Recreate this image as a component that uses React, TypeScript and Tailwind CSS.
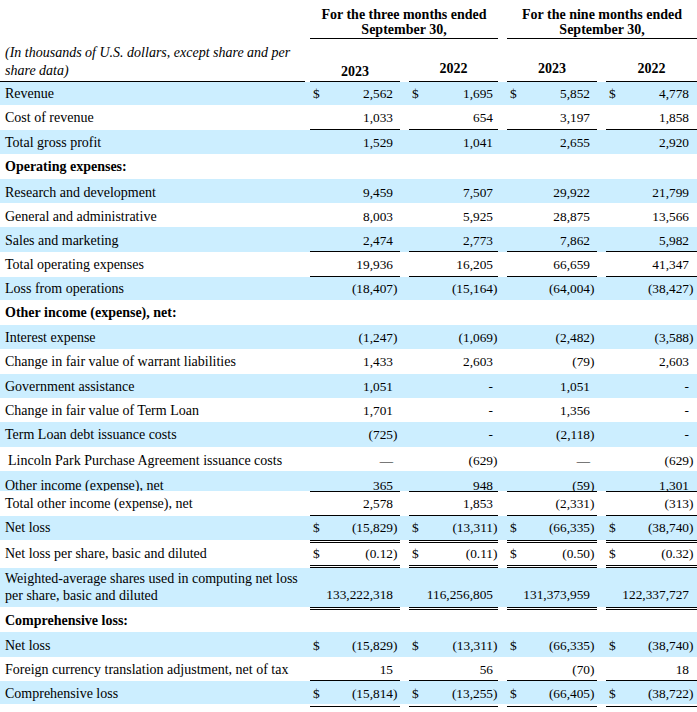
import type { ReactNode } from "react";

// Condensed statement of operations — SEC-filing style table.
// Lines are drawn with inset shadows so they never push the text around.

const ONE_BOTTOM = "shadow-[inset_0_-1px_0_#000]";
const ONE_TOP_BOTTOM = "shadow-[inset_0_1px_0_#000,inset_0_-1px_0_#000]";
const TWO_TOP_BOTTOM =
  "shadow-[inset_0_1px_0_#000,inset_0_2px_0_#fff,inset_0_3px_0_#000,inset_0_-1px_0_#000,inset_0_-2px_0_#fff,inset_0_-3px_0_#000]";
const TWO_TOP = "shadow-[inset_0_1px_0_#000,inset_0_2px_0_#fff,inset_0_3px_0_#000]";

const cols = [
  { ml: "ml-[5px]", w: "w-[90px]", paren: "w-[7px]" },
  { ml: "ml-[9px]", w: "w-[89px]", paren: "w-[5px]" },
  { ml: "ml-[9px]", w: "w-[90px]", paren: "w-[7px]" },
  { ml: "ml-[9px]", w: "w-[91px]", paren: "w-[8px]" },
];

type RowDef = {
  label: ReactNode;
  vals?: string[];
  h: string;
  pt: string;
  valPt?: string;
  blue?: boolean;
  bold?: boolean;
  dollar?: boolean;
  line?: string;
  labelClass?: string;
};

const rows: RowDef[] = [
  { label: "Revenue", vals: ["2,562", "1,695", "5,852", "4,778"], h: "h-[23px]", pt: "pt-[4px]", blue: true, dollar: true },
  { label: "Cost of revenue", vals: ["1,033", "654", "3,197", "1,858"], h: "h-[25px]", pt: "pt-[5px]", line: ONE_BOTTOM },
  { label: "Total gross profit", vals: ["1,529", "1,041", "2,655", "2,920"], h: "h-[24px]", pt: "pt-[5px]", blue: true },
  { label: "Operating expenses:", h: "h-[25px]", pt: "pt-[5px]", bold: true },
  { label: "Research and development", vals: ["9,459", "7,507", "29,922", "21,799"], h: "h-[24px]", pt: "pt-[6px]", blue: true },
  { label: "General and administrative", vals: ["8,003", "5,925", "28,875", "13,566"], h: "h-[24px]", pt: "pt-[6px]" },
  { label: "Sales and marketing", vals: ["2,474", "2,773", "7,862", "5,982"], h: "h-[25px]", pt: "pt-[6px]", blue: true, line: ONE_BOTTOM },
  { label: "Total operating expenses", vals: ["19,936", "16,205", "66,659", "41,347"], h: "h-[25px]", pt: "pt-[5px]", line: ONE_BOTTOM },
  { label: "Loss from operations", vals: ["(18,407)", "(15,164)", "(64,004)", "(38,427)"], h: "h-[23px]", pt: "pt-[4px]", blue: true },
  { label: "Other income (expense), net:", h: "h-[25px]", pt: "pt-[5px]", bold: true },
  { label: "Interest expense", vals: ["(1,247)", "(1,069)", "(2,482)", "(3,588)"], h: "h-[24px]", pt: "pt-[5px]", blue: true },
  { label: "Change in fair value of warrant liabilities", vals: ["1,433", "2,603", "(79)", "2,603"], h: "h-[25px]", pt: "pt-[5px]" },
  { label: "Government assistance", vals: ["1,051", "-", "1,051", "-"], h: "h-[24px]", pt: "pt-[5px]", blue: true },
  { label: "Change in fair value of Term Loan", vals: ["1,701", "-", "1,356", "-"], h: "h-[24px]", pt: "pt-[5px]" },
  { label: "Term Loan debt issuance costs", vals: ["(725)", "-", "(2,118)", "-"], h: "h-[25px]", pt: "pt-[5px]", blue: true },
  { label: "Lincoln Park Purchase Agreement issuance costs", vals: ["—", "(629)", "—", "(629)"], h: "h-[24px]", pt: "pt-[6px]", labelClass: "pl-[8px]" },
  { label: "Other income (expense), net", vals: ["365", "948", "(59)", "1,301"], h: "h-[20px]", pt: "pt-[7px]", blue: true },
  { label: "Total other income (expense), net", vals: ["2,578", "1,853", "(2,331)", "(313)"], h: "h-[25px]", pt: "pt-[5px]", line: ONE_TOP_BOTTOM },
  { label: "Net loss", vals: ["(15,829)", "(13,311)", "(66,335)", "(38,740)"], h: "h-[24px]", pt: "pt-[4px]", blue: true, dollar: true },
  { label: "Net loss per share, basic and diluted", vals: ["(0.12)", "(0.11)", "(0.50)", "(0.32)"], h: "h-[28px]", pt: "pt-[6px]", dollar: true, line: TWO_TOP_BOTTOM },
  {
    label: (
      <>
        Weighted-average shares used in computing net loss
        <br />
        per share, basic and diluted
      </>
    ),
    vals: ["133,222,318", "116,256,805", "131,373,959", "122,337,727"],
    h: "h-[39px]",
    pt: "pt-[2px]",
    valPt: "pt-[19px]",
    blue: true,
  },
  { label: "Comprehensive loss:", h: "h-[25px]", pt: "pt-[6px]", bold: true, vals: ["", "", "", ""], line: TWO_TOP },
  { label: "Net loss", vals: ["(15,829)", "(13,311)", "(66,335)", "(38,740)"], h: "h-[25px]", pt: "pt-[6px]", blue: true, dollar: true },
  { label: "Foreign currency translation adjustment, net of tax", vals: ["15", "56", "(70)", "18"], h: "h-[24px]", pt: "pt-[5px]", line: ONE_BOTTOM },
  { label: "Comprehensive loss", vals: ["(15,814)", "(13,255)", "(66,405)", "(38,722)"], h: "h-[23px]", pt: "pt-[5px]", blue: true, dollar: true },
];

function Value({ v, i, row }: { v: string; i: number; row: RowDef }) {
  const col = cols[i];
  const neg = v.startsWith("(") && v.endsWith(")");
  const body = neg ? v.slice(0, -1) : v;
  return (
    <div className={`${col.ml} ${col.w} ${row.line ?? ""} ${row.valPt ?? row.pt} flex h-full`}>
      <span className="w-[12px] pl-[3px]">{row.dollar ? "$" : ""}</span>
      <span className="flex-1 text-right whitespace-nowrap">{body}</span>
      <span className={col.paren}>{neg ? ")" : ""}</span>
    </div>
  );
}

function BodyRow({ row }: { row: RowDef }) {
  return (
    <div className={`flex overflow-hidden leading-[15px] ${row.h} ${row.blue ? "bg-[#cceeff]" : "bg-white"}`}>
      <div
        className={`w-[305px] shrink-0 whitespace-nowrap text-[14px] ${row.pt} ${row.labelClass ?? "pl-[5px]"} ${row.bold ? "font-bold" : ""} ${row.valPt ? "leading-[17px]" : ""}`}
      >
        {row.label}
      </div>
      {row.vals?.map((v, i) => <Value key={i} v={v} i={i} row={row} />)}
    </div>
  );
}

export default function App() {
  return (
    <div className="h-[712px] w-[697px] overflow-hidden bg-white font-['Liberation_Serif',serif] text-[13.33px] text-black">
      {/* period headers */}
      <div className="flex h-[39px] text-center text-[14px] font-bold leading-[15px]">
        <div className="w-[305px] shrink-0" />
        <div className={`ml-[5px] w-[188px] pt-[7px] ${ONE_BOTTOM}`}>
          For the three months ended
          <br />
          September 30,
        </div>
        <div className={`ml-[9px] w-[190px] pt-[7px] ${ONE_BOTTOM}`}>
          For the nine months ended
          <br />
          September 30,
        </div>
      </div>

      {/* units + years */}
      <div className="flex h-[43px]">
        <div className={`w-[305px] shrink-0 pl-[5px] pt-[5px] text-[14px] italic leading-[18px] ${ONE_BOTTOM}`}>
          (In thousands of U.S. dollars, except share and per
          <br />
          share data)
        </div>
        <div className={`ml-[5px] w-[90px] pt-[25px] text-center text-[14px] font-bold leading-[15px] ${ONE_BOTTOM}`}>2023</div>
        <div className={`ml-[9px] w-[89px] pt-[22px] text-center text-[14px] font-bold leading-[15px] ${ONE_BOTTOM}`}>2022</div>
        <div className={`ml-[9px] w-[90px] pt-[22px] text-center text-[14px] font-bold leading-[15px] ${ONE_BOTTOM}`}>2023</div>
        <div className={`ml-[9px] w-[91px] pt-[22px] text-center text-[14px] font-bold leading-[15px] ${ONE_BOTTOM}`}>2022</div>
      </div>

      {rows.map((row, i) => (
        <BodyRow key={i} row={row} />
      ))}

      {/* closing rule under the totals */}
      <div className="flex h-[8px]">
        <div className="w-[305px] shrink-0" />
        {cols.map((c, i) => (
          <div key={i} className={`${c.ml} ${c.w} pt-[2px]`}>
            <div className="h-px bg-black" />
          </div>
        ))}
      </div>
    </div>
  );
}
